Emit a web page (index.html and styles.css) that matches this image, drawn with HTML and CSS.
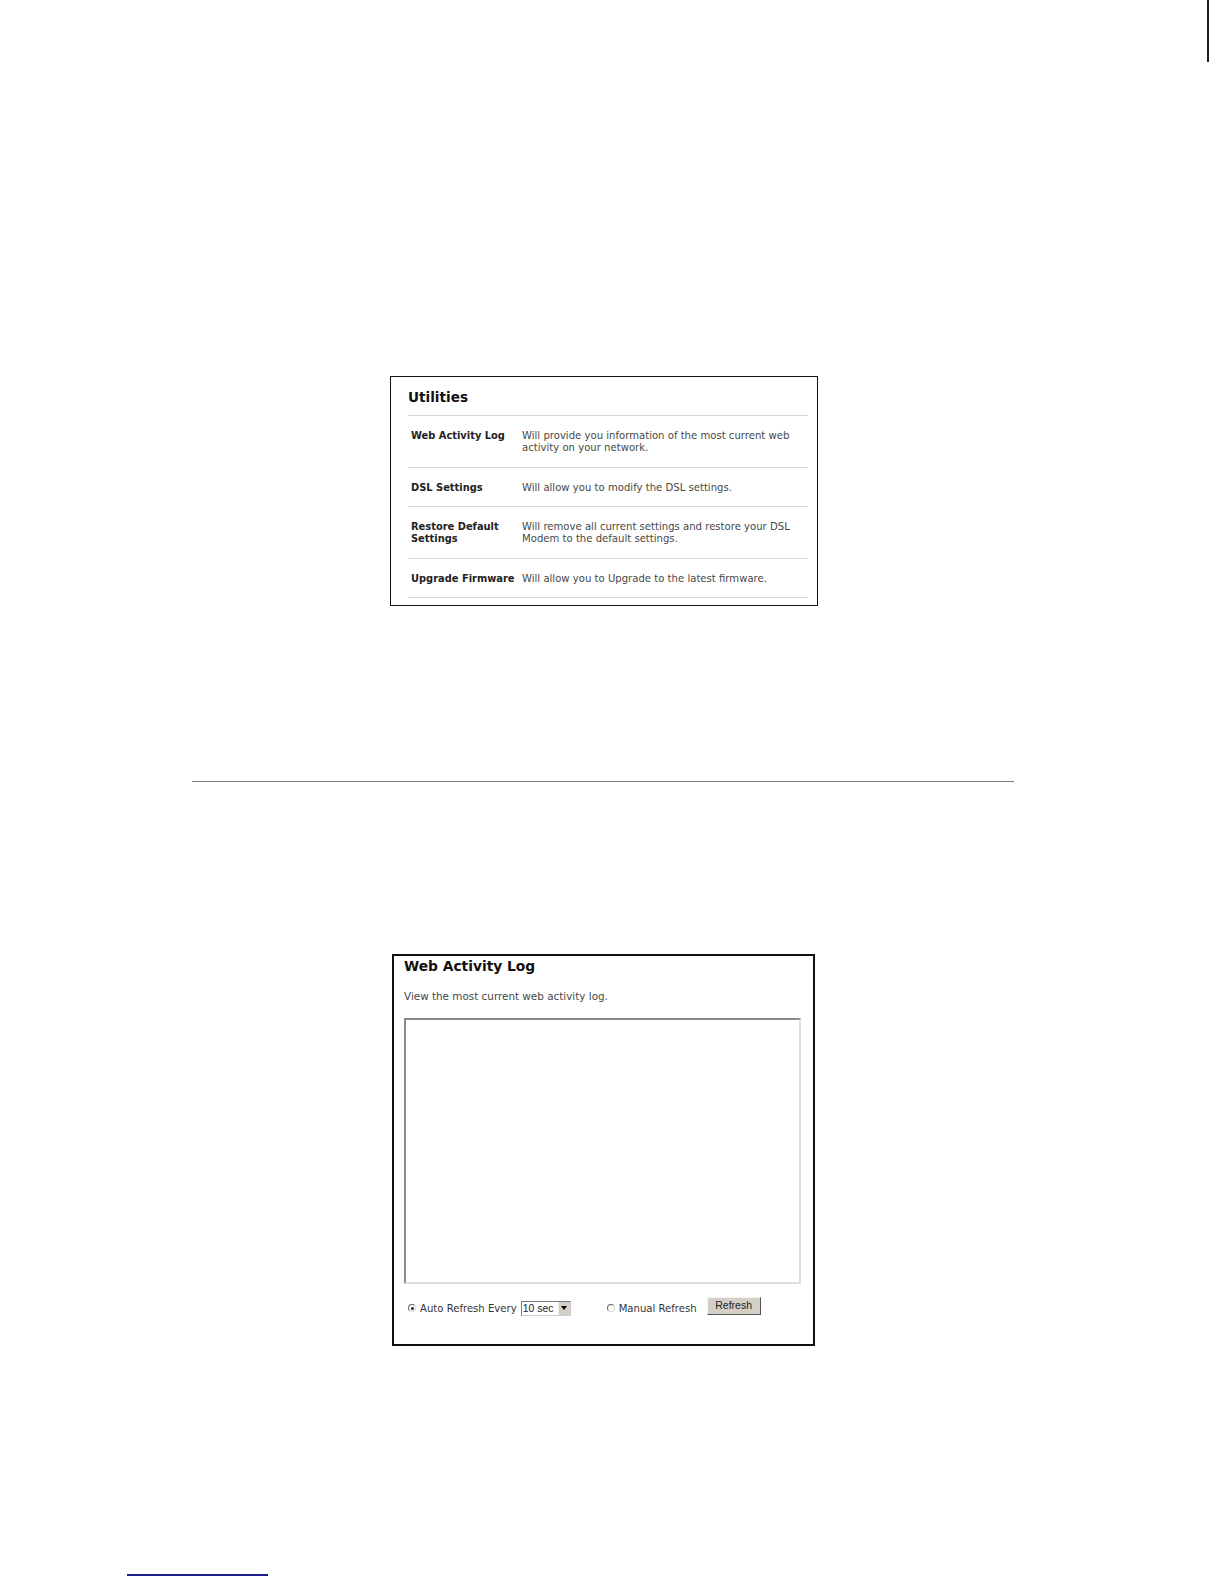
FILE: index.html
```html
<!DOCTYPE html>
<html>
<head>
<meta charset="utf-8">
<link rel="stylesheet" href="styles.css">
</head>
<body>
<div class="page">
  <div class="edge-mark"></div>

  <section class="util-box">
    <h2 class="util-title">Utilities</h2>
    <div class="util-rows">
      <div class="util-row">
        <div class="util-label">Web Activity Log</div>
        <div class="util-desc">Will provide you information of the most current web activity on your network.</div>
      </div>
      <div class="util-row">
        <div class="util-label">DSL Settings</div>
        <div class="util-desc">Will allow you to modify the DSL settings.</div>
      </div>
      <div class="util-row">
        <div class="util-label">Restore Default Settings</div>
        <div class="util-desc">Will remove all current settings and restore your DSL Modem to the default settings.</div>
      </div>
      <div class="util-row">
        <div class="util-label">Upgrade Firmware</div>
        <div class="util-desc">Will allow you to Upgrade to the latest firmware.</div>
      </div>
    </div>
  </section>

  <hr class="divider">

  <section class="log-box">
    <h2 class="log-title">Web Activity Log</h2>
    <p class="log-desc">View the most current web activity log.</p>
    <div class="log-area"></div>
    <div class="log-controls">
      <span class="radio checked"></span>
      <span class="ctl-label">Auto Refresh Every</span>
      <span class="select"><span class="select-val">10 sec</span><span class="select-btn"><svg width="6" height="4" viewBox="0 0 6 4"><path d="M0 0H6L3 4Z" fill="#000"/></svg></span></span>
      <span class="radio manual"></span>
      <span class="ctl-label">Manual Refresh</span>
      <span class="button">Refresh</span>
    </div>
  </section>

  <div class="footnote-line"></div>
</div>
</body>
</html>
```

FILE: styles.css
```css
html, body {
  margin: 0;
  padding: 0;
  background: #fff;
  width: 1224px;
  height: 1584px;
  overflow: hidden;
}
.page {
  position: relative;
  width: 1224px;
  height: 1584px;
  padding-top: 376px;
  box-sizing: border-box;
  overflow: hidden;
  font-family: "DejaVu Sans", Verdana, sans-serif;
}
.edge-mark {
  position: absolute;
  left: 1207px;
  top: 0;
  width: 2px;
  height: 62px;
  background: #222;
}

/* Utilities box */
.util-box {
  margin-left: 390px;
  width: 428px;
  height: 230px;
  box-sizing: border-box;
  border: 1.5px solid #111;
  padding: 0 9px 0 17px;
}
.util-title {
  margin: 0;
  padding-top: 12px;
  height: 26px;
  font-size: 13.6px;
  font-weight: bold;
  color: #111;
  line-height: 16px;
  border-bottom: 1px solid #d6d6d6;
}
.util-row {
  display: flex;
  padding: 14px 0 13px 3px;
  border-bottom: 1px solid #d8d8d8;
  line-height: 12px;
}
.util-row:nth-child(2), .util-row:nth-child(4) {
  padding-top: 14px;
  padding-bottom: 12px;
}
.util-label {
  width: 111px;
  flex: none;
  font-size: 9.9px;
  font-weight: bold;
  color: #222;
}
.util-desc {
  font-size: 10.1px;
  color: #484848;
  width: 285px;
}

/* divider */
.divider {
  margin: 175px 0 0 192px;
  width: 822px;
  height: 0;
  border: 0;
  border-top: 1px solid #7a7a7a;
}

/* log box */
.log-box {
  margin: 172px 0 0 392px;
  width: 423px;
  height: 392px;
  box-sizing: border-box;
  border: 2px solid #111;
  padding: 0 12px 0 10px;
}
.log-title {
  margin: 0;
  padding-top: 2px;
  font-size: 13.8px;
  font-weight: bold;
  color: #111;
  line-height: 16px;
}
.log-desc {
  margin: 16px 0 0;
  font-size: 10.4px;
  color: #484848;
  line-height: 12px;
}
.log-area {
  margin-top: 16px;
  height: 266px;
  box-sizing: border-box;
  border: 2px solid;
  border-color: #8a8a8a #dedede #dedede #8a8a8a;
  background: #fff;
}
.log-controls {
  display: flex;
  align-items: center;
  margin-top: 14px;
  padding-left: 4px;
  height: 20px;
  font-size: 10.1px;
  color: #333;
}
.radio {
  width: 6px;
  height: 6px;
  border: 1px solid;
  border-color: #666 #ddd #ddd #666;
  border-radius: 50%;
  position: relative;
  margin-right: 4px;
}
.radio.checked::after {
  content: "";
  position: absolute;
  left: 1.5px;
  top: 1.5px;
  width: 3px;
  height: 3px;
  border-radius: 50%;
  background: #222;
}
.radio.manual {
  margin-left: 36px;
}
.ctl-label {
  white-space: nowrap;
}
.select {
  display: flex;
  align-items: stretch;
  margin-left: 4px;
  height: 15px;
  box-sizing: border-box;
  border: 1px solid;
  border-color: #777 #ccc #ccc #777;
}
.select-val {
  width: 35px;
  padding-left: 1px;
  font-family: "Liberation Sans", Arial, sans-serif;
  font-size: 10.5px;
  line-height: 13px;
  color: #222;
}
.select-btn {
  width: 11px;
  background: #d4d0c8;
  border-left: 1px solid #eee;
  display: flex;
  align-items: center;
  justify-content: center;
}
.button {
  margin-left: 10px;
  width: 54px;
  height: 18px;
  box-sizing: border-box;
  background: #d4d0c8;
  border: 1px solid;
  border-color: #f2f2f2 #555 #555 #f2f2f2;
  font-family: "Liberation Sans", Arial, sans-serif;
  font-size: 10.5px;
  color: #222;
  text-align: center;
  line-height: 14px;
  position: relative;
  top: -2px;
}

.footnote-line {
  position: absolute;
  left: 127px;
  top: 1574px;
  width: 141px;
  height: 2px;
  background: #1e1e8a;
}
```
